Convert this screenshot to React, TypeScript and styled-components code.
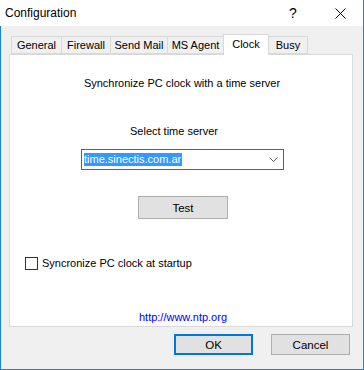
import React from "react"
import styled, {createGlobalStyle} from "styled-components"

const GlobalStyle = createGlobalStyle`
  html, body {
    margin: 0;
    padding: 0;
    background: #ffffff;
  }
  * {
    box-sizing: border-box;
  }
`

const StyledWindow = styled.div`
  width: 364px;
  height: 370px;
  display: flex;
  flex-direction: column;
  border-right: 1px solid #1883d7;
  border-bottom: 1px solid #1883d7;
  font-family: "Liberation Sans", Arial, sans-serif;
  font-size: 11px;
  color: #000000;
`

const StyledTitleBar = styled.div`
  height: 26px;
  display: flex;
  align-items: center;
  background: #ffffff;
  padding-left: 5px;
`

const StyledTitle = styled.div`
  font-size: 12px;
  flex: 1;
  line-height: 14px;
  padding-bottom: 1px;
`

const StyledHelp = styled.div`
  width: 12px;
  font-size: 14px;
  line-height: 16px;
  margin-right: 35px;
  text-align: center;
`

const StyledClose = styled.div`
  width: 12px;
  height: 12px;
  display: flex;
  align-items: center;
  justify-content: center;
  margin-right: 17px;
`

const StyledBody = styled.div`
  flex: 1;
  display: flex;
  flex-direction: column;
  background: #f0f0f0;
  border-left: 1px solid #1883d7;
  padding: 8px 10px 0 8px;
`

const StyledTabStrip = styled.div`
  height: 20px;
  display: flex;
  align-items: flex-end;
  padding-left: 2px;
`

const StyledTab = styled.div<{$width: number, $active: boolean}>`
  width: ${props => props.$width}px;
  height: ${props => props.$active ? 21 : 18}px;
  margin-left: -1px;
  margin-bottom: ${props => props.$active ? -1 : 0}px;
  display: flex;
  align-items: center;
  justify-content: center;
  border: 1px solid #d9d9d9;
  border-bottom: ${props => props.$active ? 'none' : '1px solid #d9d9d9'};
  background: ${props => props.$active ? '#ffffff' : '#f0f0f0'};
  line-height: 13px;
  padding-bottom: ${props => props.$active ? 2 : 0}px;
  position: relative;
  z-index: ${props => props.$active ? 1 : 0};

  &:first-child {
    margin-left: 0;
  }
`

const StyledPanel = styled.div`
  height: 273px;
  display: flex;
  flex-direction: column;
  align-items: center;
  background: #ffffff;
  border: 1px solid #d9d9d9;
  padding: 22px 0 0 0;
`

const StyledLabel = styled.div<{$shift?: number}>`
  line-height: 13px;
  margin-right: ${props => props.$shift ?? 0}px;
`

const StyledSectionLabel = styled(StyledLabel)`
  margin-top: 35px;
`

const StyledCombo = styled.div`
  width: 203px;
  height: 21px;
  margin-top: 11px;
  margin-left: 3px;
  display: flex;
  align-items: center;
  justify-content: space-between;
  border: 1px solid #0078d7;
  background: #ffffff;
  padding: 0 5px 0 2px;
`

const StyledSelected = styled.span`
  background: #3399ff;
  color: #ffffff;
  line-height: 13px;
  padding: 0 1px 0 0;
`

const StyledButton = styled.div<{$focused?: boolean}>`
  width: ${props => props.$focused ? 79 : 79}px;
  height: 21px;
  display: flex;
  align-items: center;
  justify-content: center;
  background: #e1e1e1;
  border: ${props => props.$focused ? '2px solid #0078d7' : '1px solid #adadad'};
  font-size: 11.5px;
`

const StyledTestButton = styled(StyledButton)`
  width: 90px;
  height: 23px;
  margin-top: 26px;
  margin-left: 4px;
`

const StyledCheckRow = styled.div`
  align-self: flex-start;
  margin-top: 38px;
  margin-left: 15px;
  display: flex;
  align-items: center;
  gap: 4px;
  line-height: 13px;
`

const StyledCheckbox = styled.div`
  width: 13px;
  height: 13px;
  border: 1px solid #333333;
  background: #ffffff;
`

const StyledLink = styled.div`
  margin-top: 41px;
  margin-left: 4px;
  color: #0000ff;
  line-height: 13px;
`

const StyledButtonRow = styled.div`
  display: flex;
  justify-content: flex-end;
  gap: 18px;
  margin-top: 7px;
  padding-right: 3px;
`

const tabs = [
    {name: 'General', width: 51},
    {name: 'Firewall', width: 50},
    {name: 'Send Mail', width: 58},
    {name: 'MS Agent', width: 57},
    {name: 'Clock', width: 46},
    {name: 'Busy', width: 40},
]

const App = (): React.JSX.Element => {
    return (
        <>
            <GlobalStyle/>
            <StyledWindow>
                <StyledTitleBar>
                    <StyledTitle>Configuration</StyledTitle>
                    <StyledHelp>?</StyledHelp>
                    <StyledClose>
                        <svg width="11" height="11" viewBox="0 0 11 11">
                            <path d="M0.5 0.5 L10.5 10.5 M10.5 0.5 L0.5 10.5" stroke="#000" strokeWidth="1" fill="none"/>
                        </svg>
                    </StyledClose>
                </StyledTitleBar>
                <StyledBody>
                    <StyledTabStrip>
                        {tabs.map(tab => (
                            <StyledTab key={tab.name} $width={tab.width} $active={tab.name == 'Clock'}>
                                {tab.name}
                            </StyledTab>
                        ))}
                    </StyledTabStrip>
                    <StyledPanel>
                        <StyledLabel $shift={-2}>Synchronize PC clock with a time server</StyledLabel>
                        <StyledSectionLabel $shift={14}>Select time server</StyledSectionLabel>
                        <StyledCombo>
                            <StyledSelected>time.sinectis.com.ar</StyledSelected>
                            <svg width="9" height="5" viewBox="0 0 9 5">
                                <path d="M0.5 0.5 L4.5 4.5 L8.5 0.5" stroke="#606060" strokeWidth="1" fill="none"/>
                            </svg>
                        </StyledCombo>
                        <StyledTestButton>Test</StyledTestButton>
                        <StyledCheckRow>
                            <StyledCheckbox/>
                            <span>Syncronize PC clock at startup</span>
                        </StyledCheckRow>
                        <StyledLink>http://www.ntp.org</StyledLink>
                    </StyledPanel>
                    <StyledButtonRow>
                        <StyledButton $focused>OK</StyledButton>
                        <StyledButton>Cancel</StyledButton>
                    </StyledButtonRow>
                </StyledBody>
            </StyledWindow>
        </>
    )
}

export default App
